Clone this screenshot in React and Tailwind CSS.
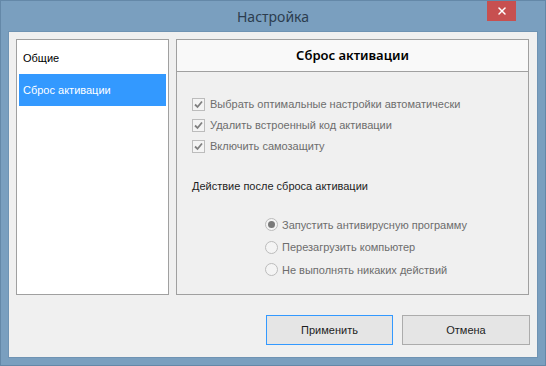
import { X } from "lucide-react";

const checks = [
  "Выбрать оптимальные настройки автоматически",
  "Удалить встроенный код активации",
  "Включить самозащиту",
];

const radios = [
  { label: "Запустить антивирусную программу", on: true },
  { label: "Перезагрузить компьютер", on: false },
  { label: "Не выполнять никаких действий", on: false },
];

function CheckBox() {
  return (
    <span className="w-[13px] h-[13px] border border-[#bcbcbc] bg-[#f4f4f4] flex items-center justify-center">
      <svg width="9" height="9" viewBox="0 0 9 9">
        <path d="M1 4.5 L3.5 7 L8 1.5" fill="none" stroke="#808080" strokeWidth="1.8" />
      </svg>
    </span>
  );
}

function Radio({ on }) {
  return (
    <span className="w-[13px] h-[13px] rounded-full border border-[#bcbcbc] bg-[#f4f4f4] flex items-center justify-center">
      {on && <span className="w-[7px] h-[7px] rounded-full bg-[#7a7a7a]" />}
    </span>
  );
}

export default function App() {
  return (
    <div className="w-[546px] h-[366px] bg-[#7a9fbf] border border-[#6488a8] flex flex-col text-[11px] font-['Liberation_Sans',Arial,sans-serif]">
      {/* title bar */}
      <div className="relative h-[30px] flex items-center justify-center">
        <span className="text-[14px] text-[#2c3d4f] mt-[1px] font-['Noto_Sans',sans-serif]">Настройка</span>
        <div className="absolute right-[29px] top-0 w-[29px] h-[20px] bg-[#c75050] flex items-center justify-center">
          <X className="w-[12px] h-[12px] text-white" strokeWidth={3} />
        </div>
      </div>

      {/* client area */}
      <div className="mx-[7px] h-[327px] bg-[#f0f0f0] border border-[#6f93b3] flex flex-col">
        <div className="flex gap-[7px] pl-[7px] pr-[8px] pt-[7px]">
          <div className="w-[153px] h-[256px] bg-white border border-[#a0a0a0] p-[2px] text-black">
            <div className="h-[32px] flex items-center pl-[4px]">Общие</div>
            <div className="h-[32px] flex items-center pl-[4px] bg-[#3399ff] text-white">
              Сброс активации
            </div>
          </div>

          <div className="flex-1 h-[256px] border border-[#a0a0a0] flex flex-col">
            <div className="h-[32px] bg-[#f9f9f9] border-b border-[#a0a0a0] flex items-center justify-center text-[13px] font-semibold text-black font-['Noto_Sans',sans-serif]">
              Сброс активации
            </div>
            <div className="flex flex-col pl-[15px] pt-[22px]">
              {checks.map((c) => (
                <div key={c} className="h-[21px] flex items-center gap-[5px] text-[#6d6d6d]">
                  <CheckBox />
                  <span>{c}</span>
                </div>
              ))}
              <div className="mt-[21px] text-[#1e1e1e]">Действие после сброса активации</div>
              <div className="flex flex-col pl-[73px] mt-[19px]">
                {radios.map((r) => (
                  <div key={r.label} className="h-[22.5px] flex items-center gap-[4px] text-[#6d6d6d]">
                    <Radio on={r.on} />
                    <span>{r.label}</span>
                  </div>
                ))}
              </div>
            </div>
          </div>
        </div>

        <div className="flex justify-end gap-[9px] pr-[7px] mt-[20px]">
          <button className="w-[127px] h-[30px] bg-[#e5e5e5] border border-[#3399ff] text-[#1e1e1e]">
            Применить
          </button>
          <button className="w-[128px] h-[30px] bg-[#e5e5e5] border border-[#acacac] text-[#1e1e1e]">
            Отмена
          </button>
        </div>
      </div>
    </div>
  );
}
